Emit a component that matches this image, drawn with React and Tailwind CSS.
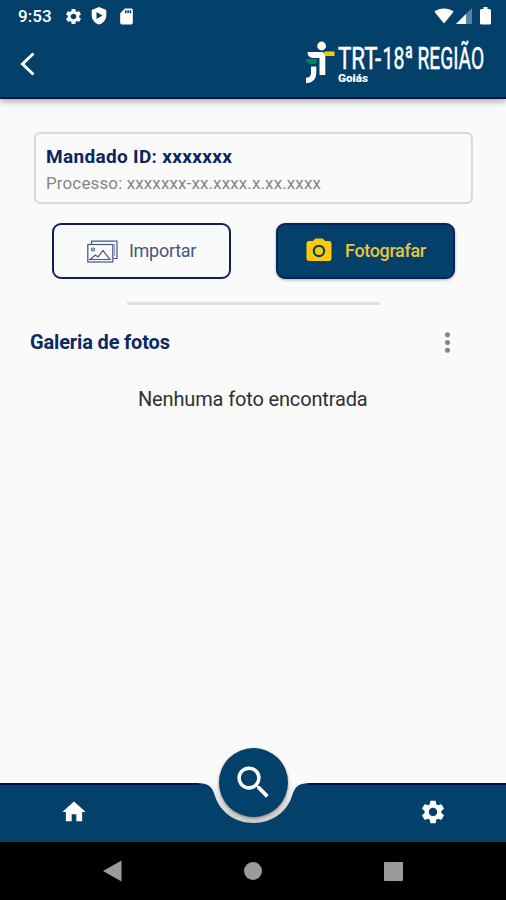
import {
  MdHome,
  MdMoreVert,
  MdPhotoCamera,
  MdSdCard,
  MdSearch,
  MdSettings,
} from 'react-icons/md';

function StatusBar() {
  return (
    <div className="flex h-8 items-center pl-[18px] pr-[15px] text-white">
      <span className="w-[46px] text-[17px] font-medium leading-none tracking-[0.1px]">
        9:53
      </span>
      <MdSettings className="size-[19px]" />
      <svg className="ml-2 h-[18px] w-4" viewBox="0 0 16 18" fill="currentColor">
        <path
          fillRule="evenodd"
          d="M8 0L15.3 3V8.5C15.3 12.6 12.2 16.4 8 17.5C3.800 16.400 0.700 12.600 0.700 8.500V3ZM5.500 5V12L11.500 8.500Z"
        />
      </svg>
      <MdSdCard className="ml-[10px] size-[19px]" />
      <div className="ml-auto flex items-center">
        <svg className="h-[16px] w-5" viewBox="0 0 20 16" fill="currentColor">
          <path d="M0.400 3.800C6 -0.600 14 -0.600 19.600 3.800L10 15.500Z" />
        </svg>
        <svg className="ml-[2px] size-[16px]" viewBox="0 0 16 16" fill="currentColor">
          <path opacity="0.35" d="M0 16L16 0V16Z" />
          <path d="M0 16L10 6V16Z" />
        </svg>
        <svg className="ml-[8px] h-[18px] w-[11px]" viewBox="0 0 11 18" fill="currentColor">
          <path d="M3.500 0H7.500V2H9.500Q11 2 11 3.500V16Q11 17.500 9.500 17.500H1.500Q0 17.500 0 16V3.500Q0 2 1.500 2H3.500Z" />
        </svg>
      </div>
    </div>
  );
}

function Logo() {
  return (
    <svg className="h-[50px] w-[184px] overflow-visible" viewBox="0 0 184 50">
      <path fill="#07835b" d="M2 21H12.500V26H7Q2 26 2 21Z" />
      <g fill="#fff">
        <circle cx="17.600" cy="8" r="4.400" />
        <path d="M3.500 14H17.500Q21.300 14 21.300 18V37H15.500V20H10Q3.500 20 3.500 14Z" />
        <path d="M7 28.500H12.300V35Q12.300 44.800 2 45.200V39.800Q7 39.500 7 35Z" />
      </g>
      <path fill="#ffc80a" d="M20.500 13.500H30.500V18H20.500Z" />
      {/* condensed lettering */}
      <g fill="#fff" stroke="#fff" strokeWidth="0.5" fontSize="32">
        <text transform="translate(34 30.500) scale(0.6 1)" textLength="72" lengthAdjust="spacingAndGlyphs">
          TRT-
        </text>
        <text transform="translate(78.500 30.500) scale(0.6 1)" textLength="51" lengthAdjust="spacingAndGlyphs">
          18ª
        </text>
        <text transform="translate(113.500 30.500) scale(0.6 1)" textLength="111" lengthAdjust="spacingAndGlyphs">
          REGIÃO
        </text>
      </g>
      <text
        x="34"
        y="43.500"
        fill="#fff"
        fontSize="11"
        fontWeight="900"
        textLength="30"
        lengthAdjust="spacingAndGlyphs"
      >
        Goiás
      </text>
    </svg>
  );
}

function Header() {
  return (
    <header className="relative h-[99px] border-b-2 border-[#06104f] bg-[#03416a] shadow-[0_3px_6px_rgba(0,0,0,0.3)]">
      <StatusBar />
      <div className="flex items-start justify-between pl-5 pr-[18px] pt-1.5">
        <button type="button" aria-label="Voltar" className="pt-[13px]">
          <svg className="h-[26px] w-4" viewBox="0 0 16 26" fill="none">
            <path d="M13.500 2.500L2.500 13L13.500 23.500" stroke="#fff" strokeWidth="3" />
          </svg>
        </button>
        <Logo />
      </div>
    </header>
  );
}

function PicturesIcon() {
  return (
    <svg
      className="h-[23px] w-[31px]"
      viewBox="0 0 31 23"
      fill="none"
      stroke="#43597c"
      strokeWidth="1.2"
    >
      <path d="M4.500 4V1.200H30V18.500H26.500" />
      <path d="M26.500 4.500H27.500V16" opacity="0.500" />
      <rect x="0.800" y="4.500" width="25" height="17.500" />
      <path d="M3 19.500L8.500 15L11 17L16 10.500L23 19.500Z" />
      <circle cx="6" cy="9.500" r="1.500" />
    </svg>
  );
}

function BottomBar() {
  return (
    <nav className="relative flex h-[60px] items-center justify-between pl-[60px] pr-[59px] text-white">
      <svg
        className="absolute inset-x-0 top-0 h-[60px] w-[506px]"
        viewBox="0 0 506 60"
      >
        <defs>
          <linearGradient id="notch" x1="0" y1="0" x2="0" y2="1">
            <stop offset="0" stopColor="#f8f8f8" />
            <stop offset="0.500" stopColor="#dedddd" />
            <stop offset="1" stopColor="#c9c7c7" />
          </linearGradient>
        </defs>
        <path fill="url(#notch)" d="M205 1H302V43H205Z" />
        <path
          fill="#03416a"
          d="M0 1H197C208 1 212 4 215 14C220 30 235 41 253.500 41C272 41 287 30 292 14C295 4 299 1 310 1H506V60H0Z"
        />
        <path
          fill="none"
          stroke="#06104f"
          strokeWidth="2"
          d="M0 2H199M308 2H506"
        />
      </svg>
      <MdHome className="relative size-7" />
      <MdSettings className="relative size-7" />
      <button
        type="button"
        aria-label="Pesquisar"
        className="absolute -top-[34px] left-[219px] flex size-[69px] items-center justify-center rounded-full bg-[#03416a] shadow-[0_1px_3px_rgba(0,0,0,0.45)]"
      >
        <MdSearch className="size-[43px]" />
      </button>
    </nav>
  );
}

function SystemNav() {
  return (
    <div className="flex h-[58px] items-center justify-between bg-black pl-[103px] pr-[103px] text-[#9b9b9b]">
      <svg className="h-[22px] w-[19px]" viewBox="0 0 19 22" fill="currentColor">
        <path d="M0 11L18.500 0.500V21.500Z" />
      </svg>
      <span className="size-[18px] rounded-full bg-[#9b9b9b]" />
      <span className="size-[19px] rounded-[1px] bg-[#9b9b9b]" />
    </div>
  );
}

export default function App() {
  return (
    <div className="flex h-[900px] w-[506px] flex-col overflow-hidden bg-[#fafafa] font-[Roboto,sans-serif]">
      <Header />
      <main className="flex-1 pt-[33px]">
        <section className="ml-[34px] h-[72px] w-[439px] rounded-md border-2 border-[#d8d8d8] pl-[10px] pt-[10px]">
          <h1 className="text-[19px] font-bold leading-[26px] tracking-[0.32px] text-[#0b2563]">
            Mandado ID: xxxxxxx
          </h1>
          <p className="text-[17px] leading-[27px] tracking-[0.12px] text-[#858585]">
            Processo: xxxxxxx-xx.xxxx.x.xx.xxxx
          </p>
        </section>
        <div className="mt-[19px] flex gap-[45px] pl-[52px]">
          <button
            type="button"
            className="flex h-[56px] w-[179px] items-center rounded-[9px] border-2 border-[#101e5e] pl-[33px] text-[18px] tracking-[-0.28px] text-[#43597c]"
          >
            <PicturesIcon />
            <span className="ml-[11px] pb-0.5">Importar</span>
          </button>
          <button
            type="button"
            className="flex h-[56px] w-[179px] items-center rounded-[9px] border-2 border-[#06235e] bg-[#03416a] pl-[26px] text-[18px] font-medium tracking-[-0.35px] text-[#ecc43b] shadow-[0_1px_3px_rgba(0,0,0,0.3)]"
          >
            <MdPhotoCamera className="size-[30px] text-[#ffc905]" />
            <span className="ml-[11px] pb-0.5">Fotografar</span>
          </button>
        </div>
        <hr className="ml-[127px] mt-[23px] w-[253px] border-t-[3px] border-[#dfdfdf]" />
        <div className="mt-[22px] flex h-[30px] items-center justify-between pl-[30px] pr-[43px]">
          <h2 className="text-[20px] font-bold tracking-[-0.15px] text-[#0b2a63]">
            Galeria de fotos
          </h2>
          <MdMoreVert className="size-[31px] text-[#858585]" />
        </div>
        <p className="mt-[27px] pl-[138px] text-[20px] leading-[30px] tracking-[-0.15px] text-[#303030]">
          Nenhuma foto encontrada
        </p>
      </main>
      <BottomBar />
      <SystemNav />
    </div>
  );
}
